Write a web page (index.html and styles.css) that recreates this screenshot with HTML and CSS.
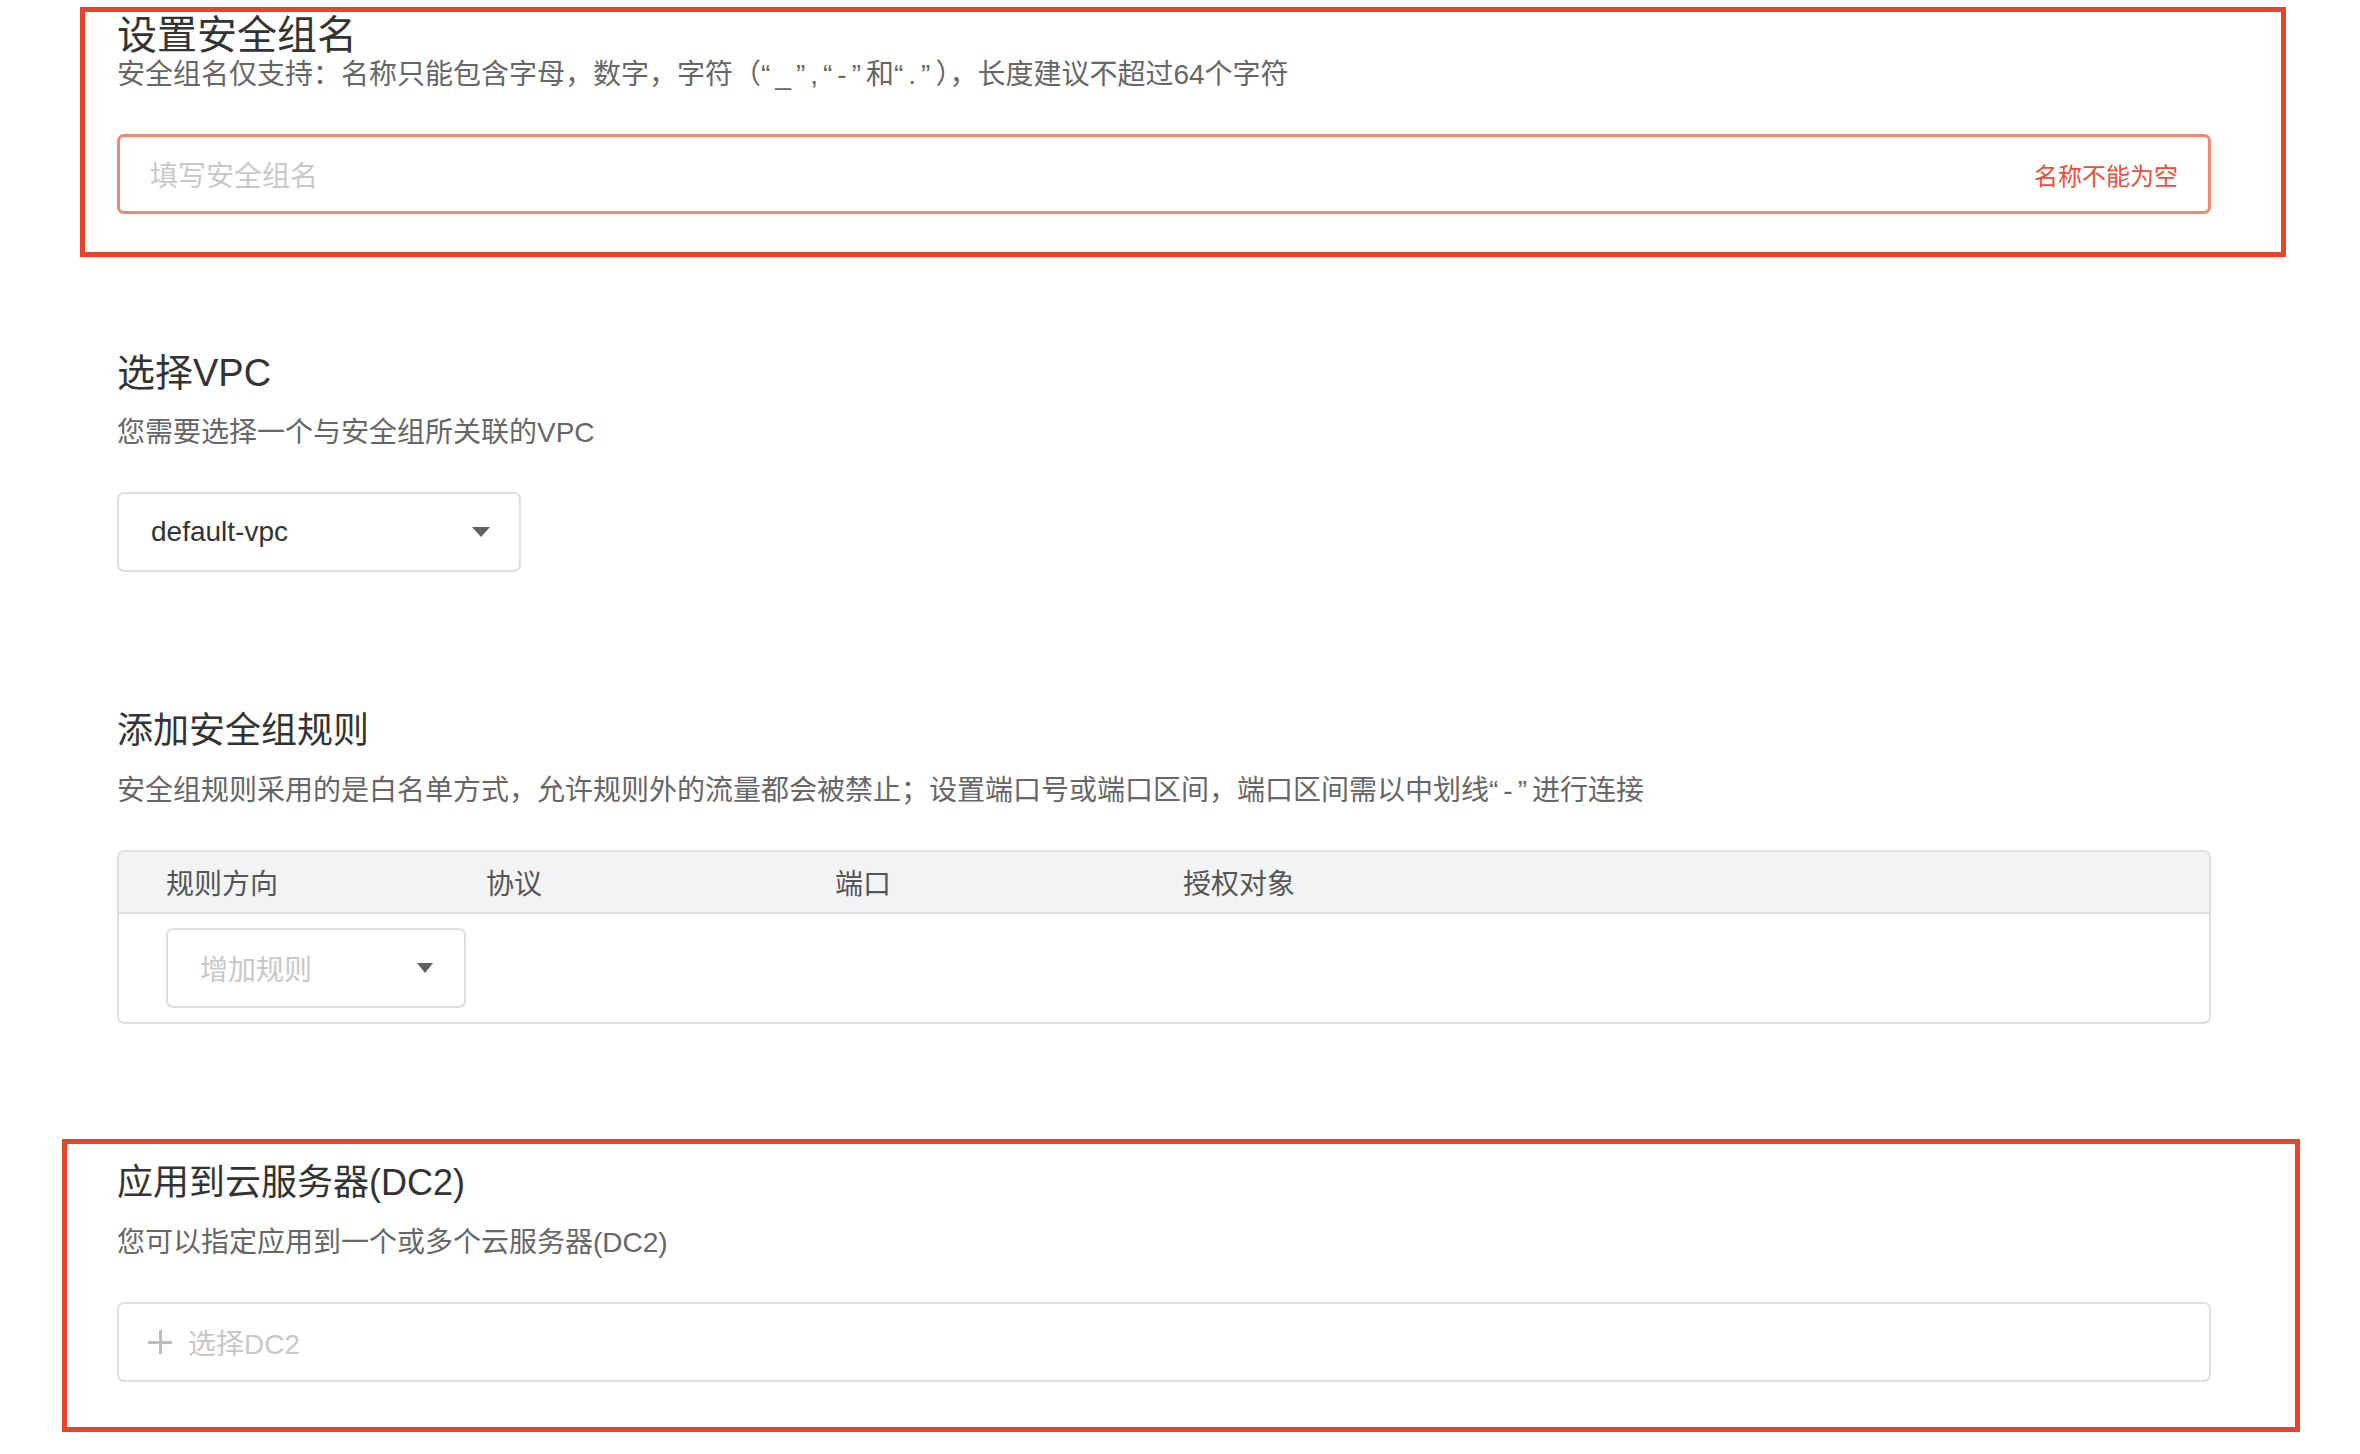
FILE: index.html
```html
<!DOCTYPE html>
<html lang="zh-CN">
<head>
  <meta charset="UTF-8">
  <meta name="viewport" content="width=device-width, initial-scale=1.0">
  <title>创建安全组</title>
  <link rel="stylesheet" href="styles.css">
</head>
<body>
  <div class="page">
    <!-- 安全组名 -->
    <section class="section">
      <h2 class="section-title title-lg">设置安全组名</h2>
      <p class="section-desc first">安全组名仅支持：名称只能包含字母，数字，字符（<span class="quote">“_”,“-”</span>和<span class="quote">“.”</span>），长度建议不超过64个字符</p>
      <div class="field field-error">
        <span class="placeholder">填写安全组名</span>
        <span class="error-tip">名称不能为空</span>
      </div>
      <div class="mark mark-name"></div>
    </section>

    <!-- VPC -->
    <section class="section">
      <h2 class="section-title title-md">选择VPC</h2>
      <p class="section-desc">您需要选择一个与安全组所关联的VPC</p>
      <div class="select select-vpc">
        <span class="select-value">default-vpc</span>
        <span class="caret"></span>
      </div>
    </section>

    <!-- 安全组规则 -->
    <section class="section">
      <h2 class="section-title">添加安全组规则</h2>
      <p class="section-desc">安全组规则采用的是白名单方式，允许规则外的流量都会被禁止；设置端口号或端口区间，端口区间需以中划线<span class="quote">“-”</span>进行连接</p>
      <div class="rule-table">
        <div class="rule-head">
          <span>规则方向</span>
          <span>协议</span>
          <span>端口</span>
          <span>授权对象</span>
        </div>
        <div class="rule-body">
          <div class="select select-rule">
            <span class="placeholder">增加规则</span>
            <span class="caret"></span>
          </div>
        </div>
      </div>
    </section>

    <!-- 云服务器 -->
    <section class="section">
      <h2 class="section-title">应用到云服务器(DC2)</h2>
      <p class="section-desc">您可以指定应用到一个或多个云服务器(DC2)</p>
      <div class="field field-add">
        <span class="plus"></span>
        <span class="placeholder">选择DC2</span>
      </div>
      <div class="mark mark-dc2"></div>
    </section>
  </div>
</body>
</html>
```

FILE: styles.css
```css
body {
  margin: 0;
  font-family: "Liberation Sans", "Noto Sans CJK SC", sans-serif;
  color: #333;
  background: #fff;
}

.page {
  width: 2094px;
  padding: 13px 0 80px 117px;
  display: flex;
  flex-direction: column;
  gap: 137px;
}

.section {
  position: relative;
}

.section-title {
  margin: 0;
  font-size: 36px;
  font-weight: normal;
  line-height: 44px;
  color: #333;
}

.title-lg {
  font-size: 40px;
}

.title-md {
  font-size: 38px;
}

.section-desc {
  margin: 20px 0 0;
  font-size: 28px;
  line-height: 36px;
  color: #666;
}

.section-desc.first {
  margin-top: 0;
}

/* 引号稍微拉开 */
.quote {
  letter-spacing: 5px;
}

/* 输入框 */
.field {
  box-sizing: border-box;
  height: 80px;
  margin-top: 41px;
  border: 2px solid #dcdfe6;
  border-radius: 7px;
  display: flex;
  align-items: center;
  padding: 0 30px;
  font-size: 28px;
}

.field-error {
  border: 3px solid #f0876e;
  justify-content: space-between;
}

.placeholder {
  color: #c8c8c8;
}

.error-tip {
  font-size: 24px;
  color: #ee4d38;
}

.field-add {
  padding-left: 29px;
  gap: 16px;
}

.plus {
  position: relative;
  width: 24px;
  height: 24px;
}

.plus::before,
.plus::after {
  content: "";
  position: absolute;
  background: #bdbdbd;
}

.plus::before {
  left: 0;
  right: 0;
  top: 11px;
  height: 3px;
}

.plus::after {
  top: 0;
  bottom: 0;
  left: 11px;
  width: 3px;
}

/* 下拉框 */
.select {
  box-sizing: border-box;
  height: 80px;
  border: 2px solid #dcdfe6;
  border-radius: 7px;
  display: flex;
  align-items: center;
  justify-content: space-between;
  padding: 0 29px 0 32px;
  font-size: 28px;
}

.select-vpc {
  width: 404px;
  margin-top: 41px;
}

.select-rule {
  width: 300px;
  padding-right: 31px;
}

.select-value {
  color: #333;
}

.caret {
  width: 0;
  height: 0;
  border-left: 9px solid transparent;
  border-right: 9px solid transparent;
  border-top: 10px solid #606060;
}

.select-rule .caret {
  border-left-width: 8px;
  border-right-width: 8px;
}

/* 规则表格 */
.rule-table {
  margin-top: 41px;
  border: 2px solid #dcdfe6;
  border-radius: 7px;
  overflow: hidden;
}

.rule-head {
  height: 60px;
  background: #f2f3f5;
  border-bottom: 2px solid #dcdfe6;
  display: grid;
  grid-template-columns: 320px 349px 348px 1fr;
  align-items: center;
  padding-left: 47px;
  font-size: 28px;
  color: #555;
}

.rule-body {
  padding: 14px 47px;
}

/* 标注框 */
.mark {
  position: absolute;
  border: 5px solid #e8432b;
  pointer-events: none;
}

.mark-name {
  top: -6px;
  left: -37px;
  right: -75px;
  bottom: -43px;
}

.mark-dc2 {
  top: -22px;
  left: -55px;
  right: -89px;
  bottom: -50px;
}
```
